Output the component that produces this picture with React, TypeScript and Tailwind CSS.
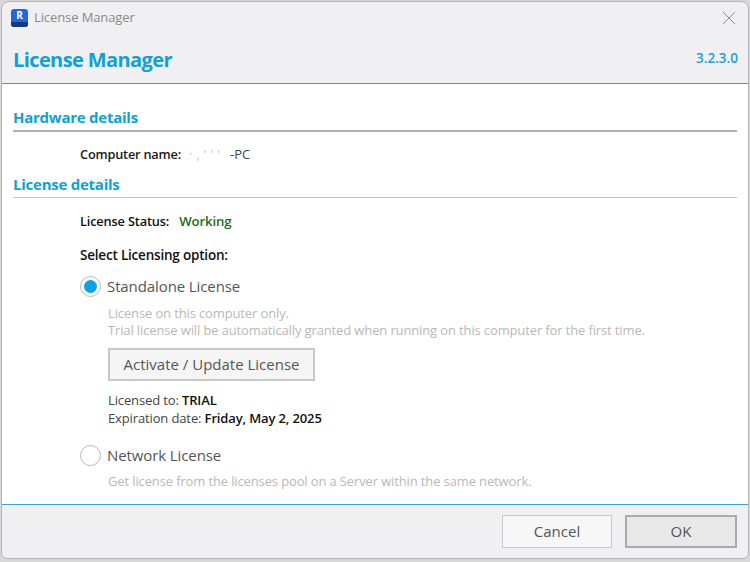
export default function App() {
  return (
    <div className="w-[750px] h-[562px] bg-[#d8d8d8] overflow-hidden font-['Open_Sans','Noto_Sans',sans-serif]">
      <div className="w-[748px] h-[558px] ml-px mt-px rounded-t-[8px] rounded-b-[6px] border border-[#b5b5b5] bg-[#f0f0f2] flex flex-col overflow-hidden">
        <div className="h-[31px] shrink-0 flex items-center pl-[9px] pr-[12px]">
          <div className="w-[17px] h-[18px] rounded-[3px] bg-[#2468d8] flex flex-col items-center">
            <span className="text-[10px] leading-[13px] font-bold text-white">R</span>
            <div className="w-full h-[5px] rounded-b-[3px] bg-[#123a80]" />
          </div>
          <span className="ml-[6px] text-[13px] text-[#8a8a8a] tracking-[-0.1px]">License Manager</span>
          <svg className="ml-auto" width="14" height="14" viewBox="0 0 14 14" fill="none" stroke="#8c8c8c" strokeWidth="1">
            <path d="M1 1L13 13M13 1L1 13" />
          </svg>
        </div>
        <div className="h-[51px] shrink-0 border-b border-[#3f9fd0] flex items-center justify-between pl-[11px] pr-[10px] pt-[4px]">
          <span className="text-[20px] font-bold text-[#12a0d2] tracking-[-0.6px]">License Manager</span>
          <span className="text-[13.5px] font-semibold text-[#1e9fd8] mt-[-3px]">3.2.3.0</span>
        </div>
        <div className="flex-1 bg-white flex flex-col px-[11px] pt-[23px]">
          <div className="border-b-2 border-[#b0b0b0] h-[25px] text-[15px] leading-[20px] font-bold text-[#12a0d2] tracking-[-0.25px]">Hardware details</div>
          <div className="mt-[14px] ml-[67px] h-[18px] flex items-center text-[12.75px] text-[#1a1a1a]">
            <span className="font-semibold tracking-[-0.2px]">Computer name:</span>
            <span className="ml-[8px] w-[41px] text-[#c0c0c0] tracking-[4px]">·,'''</span>
            <span className="text-[13px] text-[#444]">-PC</span>
          </div>
          <div className="mt-[10px] border-b border-[#c4c4c4] h-[24px] text-[15px] leading-[20px] font-bold text-[#12a0d2] tracking-[-0.25px]">License details</div>
          <div className="mt-[15px] ml-[67px] h-[18px] flex items-center text-[12.75px] font-semibold tracking-[-0.15px] text-[#111]">
            License Status:
            <span className="ml-[10px] text-[13.25px] text-[#1a6e1a]">Working</span>
          </div>
          <div className="mt-[15px] ml-[67px] h-[18px] flex items-center text-[13.5px] font-semibold tracking-[-0.2px] text-[#111]">Select Licensing option:</div>
          <div className="mt-[11px] ml-[67px] flex items-center h-[22px]">
            <div className="w-[21px] h-[21px] rounded-full border border-[#b8b8b8] flex items-center justify-center">
              <div className="w-[13px] h-[13px] rounded-full bg-[#0ea0e4]" />
            </div>
            <span className="ml-[6px] text-[15px] text-[#555] tracking-[-0.1px]">Standalone License</span>
          </div>
          <div className="ml-[95px] mt-[8px] text-[13px] leading-[17px] text-[#b8b8b8] tracking-[-0.13px]">
            <div>License on this computer only.</div>
            <div>Trial license will be automatically granted when running on this computer for the first time.</div>
          </div>
          <button className="ml-[95px] mt-[9px] w-[207px] h-[33px] border-2 border-[#c8c8c8] bg-[#f5f5f5] text-[15px] text-[#555] text-center">Activate / Update License</button>
          <div className="ml-[95px] mt-[10px] text-[13px] leading-[18px] text-[#444] tracking-[-0.13px]">
            <div>Licensed to: <span className="font-semibold text-[#111]">TRIAL</span></div>
            <div>Expiration date: <span className="font-semibold text-[#111]">Friday, May 2, 2025</span></div>
          </div>
          <div className="mt-[17px] ml-[67px] flex items-center h-[22px]">
            <div className="w-[21px] h-[21px] rounded-full border border-[#b8b8b8] bg-white" />
            <span className="ml-[6px] text-[15px] text-[#555] tracking-[-0.1px]">Network License</span>
          </div>
          <div className="ml-[95px] mt-[7px] text-[13px] leading-[17px] text-[#b8b8b8] tracking-[-0.13px]">Get license from the licenses pool on a Server within the same network.</div>
        </div>
        <div className="h-[54px] shrink-0 border-t border-[#3f9fd0] flex items-center justify-end gap-[13px] pr-[11px] pb-[1px]">
          <button className="w-[110px] h-[33px] border border-[#c8c8c8] bg-[#f7f7f7] text-[15px] text-[#555]">Cancel</button>
          <button className="w-[112px] h-[33px] border-2 border-[#aaa] bg-[#e8e8e8] text-[15px] text-[#555]">OK</button>
        </div>
      </div>
    </div>
  );
}
